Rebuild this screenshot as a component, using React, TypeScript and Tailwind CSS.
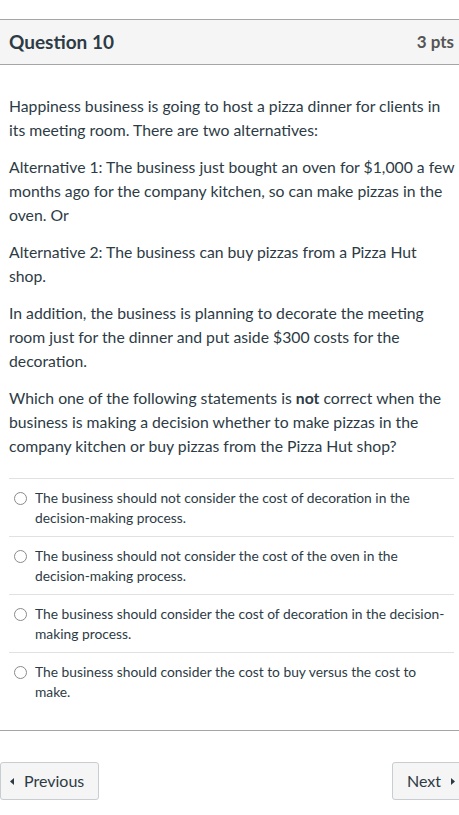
const answers = [
  'The business should not consider the cost of decoration in the decision-making process.',
  'The business should not consider the cost of the oven in the decision-making process.',
  'The business should consider the cost of decoration in the decision-making process.',
  'The business should consider the cost to buy versus the cost to make.',
]

export default function App() {
  return (
    <div className="min-h-[815px] w-[459px] bg-white pt-[19px] font-['Lato',sans-serif] text-[#2d3b45]">
      <section className="border-b border-[#a5a5a5]">
        <header className="flex h-[46px] items-center justify-between border-y border-[#a5a5a5] bg-[#f5f5f5] pl-[9px] pr-[5px]">
          <h2 className="text-[19px] font-bold">Question 10</h2>
          <span className="text-[17px] font-bold text-[#555]">3 pts</span>
        </header>

        <div className="pl-[9px] pr-[2px] pt-[29px] text-[15.75px] leading-[24px]">
          <p className="mb-[13px]">
            Happiness business is going to host a pizza dinner for clients in its meeting room. There are two alternatives:
          </p>
          <p className="mb-[13px]">
            Alternative 1: The business just bought an oven for $1,000 a few months ago for the company kitchen, so can make pizzas in the oven. Or
          </p>
          <p className="mb-[13px]">Alternative 2: The business can buy pizzas from a Pizza Hut shop.</p>
          <p className="mb-[13px]">
            In addition, the business is planning to decorate the meeting room just for the dinner and put aside $300 costs for the decoration.
          </p>
          <p className="pr-[7px]">
            Which one of the following statements is <strong>not</strong> correct when the business is making a decision whether to make pizzas in the company kitchen or buy pizzas from the Pizza Hut shop?
          </p>
        </div>

        <div className="ml-[9px] mr-[5px] mt-[20px] pb-[20px]">
          {answers.map((a, i) => (
            <label
              key={i}
              className="flex gap-[8px] border-t border-[#e1e1e1] pt-[9px] pb-[8px] text-[13.8px] leading-[20px]"
            >
              <span className="mt-[4px] ml-[5px] h-[13px] w-[13px] shrink-0 rounded-full border border-[#8a8a8a] bg-white" />
              <span>{a}</span>
            </label>
          ))}
        </div>
      </section>

      <nav className="mt-[31px] flex items-center justify-between">
        <button
          type="button"
          className="flex h-[38px] w-[99px] items-center gap-[10px] rounded-[3px] border border-[#c7cdd1] bg-[#f5f5f5] pl-[9px] text-[16px] text-[#2d3b45]"
        >
          <Tri dir="left" />
          Previous
        </button>
        <button
          type="button"
          className="mr-[-4px] flex h-[38px] w-[71px] items-center gap-[10px] rounded-[3px] border border-[#c7cdd1] bg-[#f5f5f5] pl-[14px] text-[16px] text-[#2d3b45]"
        >
          Next
          <Tri dir="right" />
        </button>
      </nav>
    </div>
  )
}

function Tri({ dir }: { dir: 'left' | 'right' }) {
  return (
    <svg width="4" height="7" viewBox="0 0 4 7" className="shrink-0">
      {dir === 'left' ? <path d="M4 0 L0 3.5 L4 7 Z" fill="#2d3b45" /> : <path d="M0 0 L4 3.5 L0 7 Z" fill="#2d3b45" />}
    </svg>
  )
}
